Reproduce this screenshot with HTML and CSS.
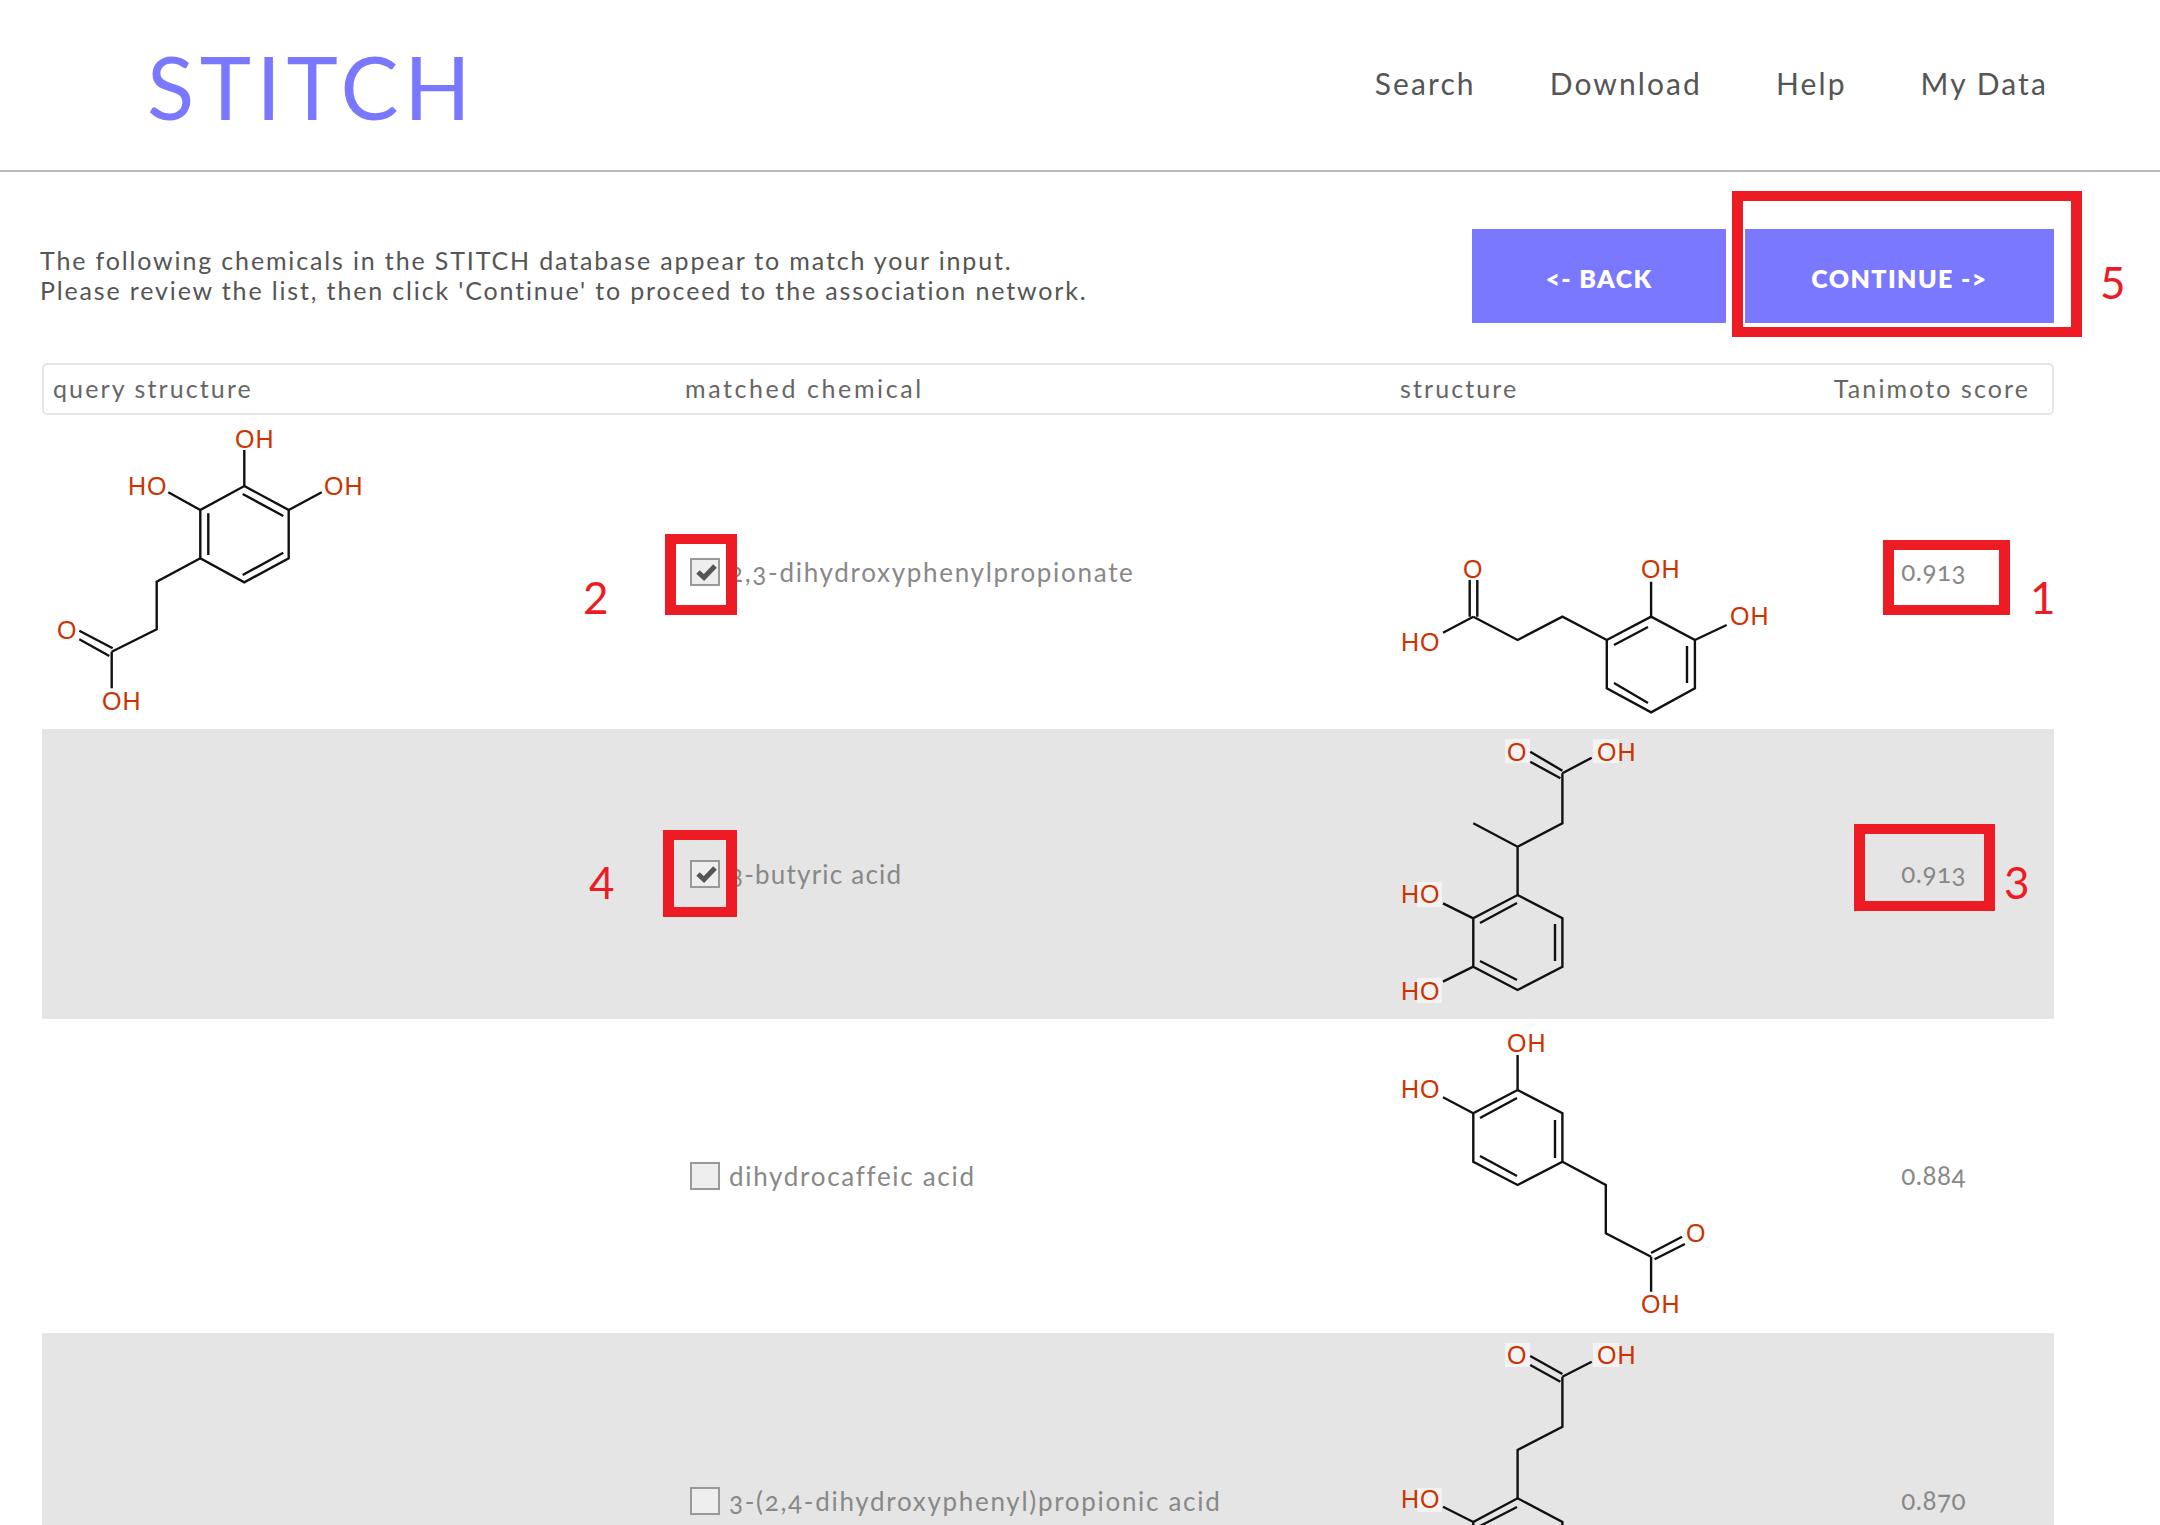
FILE: index.html
```html
<!DOCTYPE html>
<html lang="en">
<head>
<meta charset="utf-8">
<title>STITCH</title>
<link rel="stylesheet" href="styles.css">
</head>
<body>
<div class="page">
  <header class="site-header">
    <div class="logo">STITCH</div>
    <nav class="nav">
      <a class="nav-search">Search</a>
      <a class="nav-download">Download</a>
      <a class="nav-help">Help</a>
      <a class="nav-data">My Data</a>
    </nav>
  </header>

  <section class="intro">
    <p class="intro-text">The following chemicals in the STITCH database appear to match your input.<br>Please review the list, then click 'Continue' to proceed to the association network.</p>
    <div class="actions">
      <button class="btn btn-back">&lt;- BACK</button>
      <button class="btn btn-continue">CONTINUE -&gt;</button>
    </div>
  </section>

  <div class="table">
    <div class="table-head">
      <span class="th-query">query structure</span>
      <span class="th-match">matched chemical</span>
      <span class="th-structure">structure</span>
      <span class="th-score">Tanimoto score</span>
    </div>

    <div class="row">
      <div class="cell-query">
        <svg class="mol" width="350" height="314" viewBox="0 0 350 314">
          <g class="bonds">
            <polygon points="202.3,71 246.7,95 246.7,143.3 202.3,167.3 158.3,143.3 158.3,95"/>
            <path d="M166.3 98.3V140M200.7 79L241.3 101M200.7 160L241.3 137.7M202.3 71V35M158.3 95L126.3 77.3M246.7 95L279.7 77.3M158.3 143.3L114.7 166.7V214.3L69.7 236.7M70.7 233.3L37.3 215.7M67.3 241L37.3 224.3M69.7 236.7V273.3"/>
          </g>
          <g class="atoms">
            <text x="193" y="32">OH</text><text x="86" y="79">HO</text><text x="282" y="79">OH</text><text x="15" y="223">O</text><text x="60" y="294">OH</text>
          </g>
        </svg>
      </div>
      <label class="cell-match"><span class="box is-checked"><svg width="26" height="24" viewBox="0 0 26 24"><path class="tick" d="M6 12L12 17.5L23 6"/></svg></span><span class="name">2,3-dihydroxyphenylpropionate</span></label>
      <div class="cell-structure">
        <svg class="mol" width="430" height="314" viewBox="0 0 430 314">
          <g class="bonds">
            <polygon points="216.8,225 261.1,201.7 304.9,225 304.9,273.3 261.1,297.3 216.8,273.3"/>
            <path d="M224 230L258 212M297 231V268M224 268L258 288M261.1 201.7V166.7M304.9 225L336.7 210M216.8 225L172.4 201.7L127.6 225L83.3 201.7M79.7 201.7V165M87.3 201.7V165M83.3 201.7L53 217.7"/>
          </g>
          <g class="atoms">
            <text x="73" y="162">O</text><text x="251" y="162">OH</text><text x="340" y="209">OH</text><text x="11" y="235">HO</text>
          </g>
        </svg>
      </div>
      <div class="cell-score">0.913</div>
    </div>

    <div class="row row-alt">
      <div class="cell-query"></div>
      <label class="cell-match"><span class="box is-checked"><svg width="26" height="24" viewBox="0 0 26 24"><path class="tick" d="M6 12L12 17.5L23 6"/></svg></span><span class="name name-short">3-butyric acid</span></label>
      <div class="cell-structure">
        <svg class="mol" width="430" height="290" viewBox="0 0 430 290">
          <g class="halo"><rect x="115" y="10" width="25" height="24"/><rect x="203" y="10" width="26" height="24"/><rect x="27" y="153" width="25" height="25"/><rect x="27" y="249" width="25" height="25"/></g>
          <g class="bonds">
            <polygon points="127.6,166 172.4,189.3 172.4,237.7 127.6,261 83.3,237.7 83.3,189.3"/>
            <path d="M90 194L127 174M165 195V232M90 232L127 251M172.4 44.3L201.7 28.7M140.2 22.7L172.4 41.7M140.2 32.7L170.4 49.3M172.4 44.3V94.3L127.6 117.7L83.3 94.3M127.6 117.7V166M83.3 189.3L53 174.3M83.3 237.7L53 252.7"/>
          </g>
          <g class="atoms">
            <text x="117" y="31">O</text><text x="207" y="31">OH</text><text x="11" y="173">HO</text><text x="11" y="270">HO</text>
          </g>
        </svg>
      </div>
      <div class="cell-score">0.913</div>
    </div>

    <div class="row">
      <div class="cell-query"></div>
      <label class="cell-match"><span class="box"></span><span class="name">dihydrocaffeic acid</span></label>
      <div class="cell-structure">
        <svg class="mol" width="430" height="314" viewBox="0 0 430 314">
          <g class="bonds">
            <polygon points="127.6,71 172.4,94.3 172.4,142.7 127.6,166 83.3,142.7 83.3,94.3"/>
            <path d="M90 99L127 79M165 101V139M90 137L127 157M127.6 71V36M83.3 94.3L53 78.3M172.4 142.7L215.8 166V214.3L261.1 237.7M261 234L292 217.7M264.6 240.3L294.9 225M261.1 237.7V272.7"/>
          </g>
          <g class="atoms">
            <text x="117" y="32">OH</text><text x="11" y="78">HO</text><text x="296" y="222">O</text><text x="251" y="293">OH</text>
          </g>
        </svg>
      </div>
      <div class="cell-score">0.884</div>
    </div>

    <div class="row row-alt">
      <div class="cell-query"></div>
      <label class="cell-match"><span class="box"></span><span class="name">3-(2,4-dihydroxyphenyl)propionic acid</span></label>
      <div class="cell-structure">
        <svg class="mol" width="430" height="336" viewBox="0 0 430 336">
          <g class="halo"><rect x="115" y="10" width="25" height="24"/><rect x="203" y="10" width="26" height="24"/><rect x="27" y="155" width="25" height="24"/></g>
          <g class="bonds">
            <polygon points="127.6,165.3 172.4,189 172.4,237 127.6,261 83.3,237 83.3,189"/>
            <path d="M90 193L127 174M172.4 43.7L201.7 28.7M140.2 23L172.4 41M140.2 32L170.4 48.7M172.4 43.7V93.7L127.6 117V165.3M83.3 189L53 173.7"/>
          </g>
          <g class="atoms">
            <text x="117" y="30">O</text><text x="207" y="30">OH</text><text x="11" y="174">HO</text>
          </g>
        </svg>
      </div>
      <div class="cell-score">0.870</div>
    </div>
  </div>

  <div class="mark mark-continue"></div><span class="num num-5">5</span>
  <div class="mark mark-check1"></div><span class="num num-2">2</span>
  <div class="mark mark-score1"></div><span class="num num-1">1</span>
  <div class="mark mark-check2"></div><span class="num num-4">4</span>
  <div class="mark mark-score2"></div><span class="num num-3">3</span>
</div>
</body>
</html>
```
FILE: styles.css
```css
html, body { margin: 0; padding: 0; height: 1525px; overflow: hidden; background: #fff; }
body { font-family: "Lato", "Liberation Sans", sans-serif; color: #555; font-variant-numeric: oldstyle-nums; }
.page { position: relative; width: 2160px; height: 1525px; overflow: hidden; }

.site-header { display: flex; justify-content: space-between; height: 170px; border-bottom: 2px solid #bbb; padding: 0 112px 0 147px; }
.logo { font-size: 87px; font-weight: 400; line-height: 1; color: #7a78ff; padding-top: 43px; letter-spacing: 5.5px; }
.nav { display: flex; gap: 74px; padding-top: 65px; font-size: 30px; font-weight: 400; line-height: 36px; color: #555; letter-spacing: 2.1px; }

.intro { display: flex; justify-content: space-between; height: 191px; padding: 0 106px 0 40px; }
.intro-text { margin: 73px 0 0; font-size: 25px; line-height: 30px; letter-spacing: 1.85px; color: #555; }
.actions { display: flex; gap: 19px; padding-top: 57px; }
.btn { height: 94px; border: 0; background: #7a78ff; color: #fff; font-family: inherit; font-weight: 800; font-size: 25px; padding: 4px 0 0; letter-spacing: 1.4px; }
.btn-back { width: 254px; }
.btn-continue { width: 309px; }

.table { margin-left: 42px; width: 2012px; }
.table-head { display: grid; grid-template-columns: 632px 715px 1fr auto; box-sizing: border-box; height: 52px; border: 2px solid #e5e5e5; border-radius: 5px; align-items: center; line-height: 44px; padding: 0 22px 2px 9px; font-size: 25px; letter-spacing: 2.1px; color: #666; }
.th-match { letter-spacing: 2.6px; }

.row { display: grid; grid-template-columns: 648px 700px 430px 234px; align-items: center; }
.row-alt { background: #e5e5e5; }
.mol { display: block; }
.bonds polygon, .bonds path { fill: none; stroke: #111; stroke-width: 2.4; stroke-linejoin: miter; }
.atoms { transform: translateY(1px); }
.atoms text { font-family: "Liberation Sans", sans-serif; font-size: 25px; letter-spacing: 1px; fill: #cc3300; }
.halo rect { fill: #f3f3f3; }

.cell-query { align-self: start; }
.cell-match { display: flex; align-items: center; gap: 9px; }
.box { box-sizing: border-box; width: 30px; height: 28px; border: 2px solid #999; background: #eee; display: block; flex: none; }
.box svg { display: block; }
.tick { fill: none; stroke: #555; stroke-width: 5; }
.name { font-size: 26px; letter-spacing: 1.7px; color: #888; line-height: 29px; }
.name-short { letter-spacing: 1.2px; }
.cell-score { font-size: 26px; color: #888; text-align: right; padding: 0 88px 2px 0; letter-spacing: 0.5px; }

.mark { position: absolute; box-sizing: border-box; border: solid #ed1c24; border-width: 10px 11px; }
.mark-continue { left: 1732px; top: 191px; width: 350px; height: 146px; }
.mark-check1 { left: 665px; top: 534px; width: 72px; height: 81px; }
.mark-check2 { left: 663px; top: 830px; width: 74px; height: 87px; }
.mark-score1 { left: 1883px; top: 540px; width: 127px; height: 75px; }
.mark-score2 { left: 1854px; top: 824px; width: 141px; height: 87px; }

.num { position: absolute; font-family: "Lato", sans-serif; font-size: 44px; line-height: 44px; color: #ed1c24; font-variant-numeric: lining-nums; }
.num-5 { left: 2100px; top: 260px; }
.num-2 { left: 583px; top: 575px; }
.num-4 { left: 589px; top: 860px; }
.num-1 { left: 2030px; top: 575px; }
.num-3 { left: 2004px; top: 860px; }
```
